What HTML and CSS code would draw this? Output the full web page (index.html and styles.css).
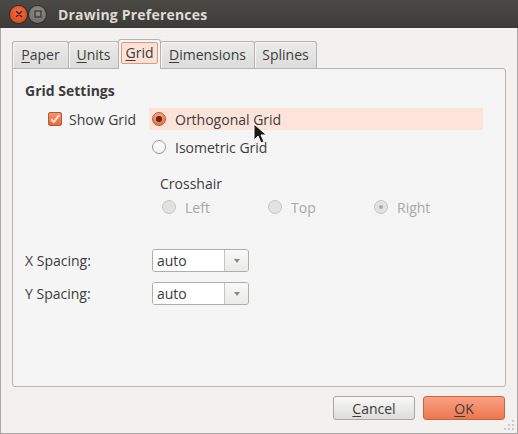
FILE: index.html
```html
<!DOCTYPE html>
<html>
<head>
<meta charset="utf-8">
<link rel="stylesheet" href="styles.css">
</head>
<body>
<div class="window">
  <div class="titlebar">
    <div class="wbtn close"><svg width="16" height="16" viewBox="0 0 16 16"><path d="M5.5 5.5l5 5M10.5 5.5l-5 5" stroke="#3a1a10" stroke-width="1.4" stroke-linecap="round"/></svg></div>
    <div class="wbtn mini"><svg width="16" height="16" viewBox="0 0 16 16"><rect x="5" y="5" width="6" height="6" fill="none" stroke="#3a3935" stroke-width="1.3"/></svg></div>
    <div class="title">Drawing Preferences</div>
  </div>
  <div class="body">
    <div class="notebook">
      <div class="tabs">
        <div class="tab w-paper"><span><u>P</u>aper</span></div>
        <div class="tab w-units"><span><u>U</u>nits</span></div>
        <div class="tab active"><span class="focus"><u>G</u>rid</span></div>
        <div class="tab w-dim"><span><u>D</u>imensions</span></div>
        <div class="tab w-spl"><span>Splines</span></div>
      </div>
      <div class="panel">
        <div class="heading">Grid Settings</div>
        <div class="gridrow">
          <div class="check-item">
            <span class="checkbox"><svg width="12" height="12" viewBox="0 0 12 12"><path d="M2.2 6.2l2.6 2.8L10.2 2" fill="none" stroke="#fde9e0" stroke-width="2"/></svg></span>
            <span>Show Grid</span>
          </div>
          <div class="radios">
            <div class="radio-row hover"><span class="radio on"></span><span>Orthogonal Grid</span></div>
            <div class="radio-row"><span class="radio"></span><span>Isometric Grid</span></div>
          </div>
        </div>
        <div class="crosshair">
          <div class="cross-label">Crosshair</div>
          <div class="cross-opts">
            <div class="radio-row dis"><span class="radio"></span><span>Left</span></div>
            <div class="radio-row dis"><span class="radio"></span><span>Top</span></div>
            <div class="radio-row dis"><span class="radio sel"></span><span>Right</span></div>
          </div>
        </div>
        <div class="spacing">
          <div class="sp-row"><span class="sp-label">X Spacing:</span>
            <div class="combo"><span class="combo-text">auto</span><span class="combo-btn"><span class="arrow"></span></span></div>
          </div>
          <div class="sp-row"><span class="sp-label">Y Spacing:</span>
            <div class="combo"><span class="combo-text">auto</span><span class="combo-btn"><span class="arrow"></span></span></div>
          </div>
        </div>
      </div>
    </div>
    <div class="buttons">
      <div class="btn"><u>C</u>ancel</div>
      <div class="btn ok"><u>O</u>K</div>
    </div>
    <div class="grip">
      <svg width="12" height="12" viewBox="0 0 12 12" fill="#c9c8c5">
        <rect x="9" y="1" width="2" height="2"/>
        <rect x="5" y="5" width="2" height="2"/><rect x="9" y="5" width="2" height="2"/>
        <rect x="1" y="9" width="2" height="2"/><rect x="5" y="9" width="2" height="2"/><rect x="9" y="9" width="2" height="2"/>
      </svg>
    </div>
  </div>
  <svg class="cursor" width="14" height="22" viewBox="0 0 14 22">
    <path d="M1 1v16l4-4 3 7 3-1.3-3-6.7h5.5z" fill="#1a1a1a" stroke="#fff" stroke-width="1"/>
  </svg>
</div>
</body>
</html>
```

FILE: styles.css
```css
* { box-sizing: border-box; }
html, body { margin: 0; padding: 0; }
body {
  width: 518px; height: 434px; overflow: hidden;
  font-family: "Open Sans", "DejaVu Sans", sans-serif;
  font-size: 14px; color: #3c3c3c;
}
u { text-decoration: underline; text-underline-offset: 2px; }
.window {
  position: relative;
  width: 518px; height: 434px;
  background: #f2f1f0;
  border-left: 1px solid #a8a7a3;
  border-right: 1px solid #a8a7a3;
  border-bottom: 1px solid #a8a7a3;
  display: flex; flex-direction: column;
}
.titlebar {
  height: 28px; flex: none;
  background: linear-gradient(#4b4a46, #3c3b37);
  display: flex; align-items: center;
  padding-left: 10px;
  margin: 0 -1px;
}
.wbtn {
  width: 17px; height: 17px; border-radius: 50%;
  display: flex; align-items: center; justify-content: center;
  margin-right: 2px;
}
.wbtn svg { display: block; }
.close { background: radial-gradient(circle at 50% 35%, #f26d3f, #d64315); box-shadow: 0 0 0 1px #2e2d2a; }
.mini { background: radial-gradient(circle at 50% 35%, #8e8c86, #6a6863); box-shadow: 0 0 0 1px #2e2d2a; }
.title {
  margin-left: 10px;
  font-weight: bold; font-size: 14px; color: #dfdbd2;
  font-family: "Open Sans", "DejaVu Sans", sans-serif;
  letter-spacing: 0.2px;
}
.body {
  flex: 1; position: relative;
  padding: 11px 11px 0 11px;
  display: flex; flex-direction: column;
}
.notebook { display: flex; flex-direction: column; }
.tabs { display: flex; align-items: flex-end; height: 29px; position: relative; z-index: 1; }
.tab {
  height: 27px;
  padding: 0 0 1px;
  display: flex; align-items: center; justify-content: center;
  background: linear-gradient(#ebebea, #dcdcdb);
  border: 1px solid #b5b4b1;
  border-bottom: none;
  border-radius: 3px 3px 0 0;
  margin-right: -1px;
  box-shadow: inset 1px 1px 0 #f7f7f6;
}
.w-paper { width: 57px; }
.w-units { width: 51px; }
.w-dim { width: 95px; }
.w-spl { width: 63px; }
.tab.active {
  width: 43px;
  height: 30px;
  background: #f5f5f5;
  box-shadow: none;
  padding: 0 0 3px;
  margin-bottom: -1px;
}
.focus {
  border: 1px solid #f0936f;
  border-radius: 2px;
  background: #fbe2d8;
  padding: 0 3px 1px;
}
.panel {
  width: 494px; height: 319px;
  background: #f5f5f5;
  border: 1px solid #b5b4b1;
  border-radius: 0 3px 3px 3px;
  padding: 13px 12px 0 12px;
}
.heading { font-weight: bold; height: 18px; line-height: 18px; }
.gridrow { display: flex; margin-top: 8px; }
.check-item {
  display: flex; align-items: center; gap: 7px;
  margin-left: 23px; width: 101px; height: 22px;
}
.checkbox {
  width: 14px; height: 14px; border-radius: 2px;
  border: 1px solid #c0552b;
  background: linear-gradient(#f6946f, #e76a3b);
  display: flex; align-items: center; justify-content: center;
  flex: none;
}
.checkbox svg { display: block; }
.radios { display: flex; flex-direction: column; gap: 6px; }
.radio-row { display: flex; align-items: center; gap: 9px; height: 22px; padding-left: 3px; white-space: nowrap; }
.radio-row.hover { background: #fde4da; width: 334px; }
.radio {
  width: 14px; height: 14px; border-radius: 50%;
  border: 1px solid #9a9997;
  background: linear-gradient(#ffffff, #efefee);
  flex: none; position: relative;
}
.radio.on {
  border-color: #c0552b;
  background: linear-gradient(#f8a284, #eb7147);
}
.radio.on::after {
  content: ""; position: absolute; left: 3px; top: 3px;
  width: 6px; height: 6px; border-radius: 50%; background: #5a2a18;
}
.crosshair { margin-left: 135px; margin-top: 16px; }
.cross-label { height: 20px; line-height: 20px; }
.cross-opts { display: grid; grid-template-columns: 106px 106px 106px; margin-top: 2px; margin-left: -1px; }
.radio-row.dis { color: #a9a8a5; }
.radio-row.dis .radio { border-color: #c6c5c2; background: #e3e2e0; }
.radio.sel::after {
  content: ""; position: absolute; left: 4px; top: 4px;
  width: 4px; height: 4px; border-radius: 50%; background: #a9a8a5;
}
.spacing { margin-top: 31px; display: flex; flex-direction: column; gap: 10px; }
.sp-row { display: flex; align-items: center; height: 23px; }
.sp-label { width: 127px; }
.combo {
  width: 97px; height: 23px;
  border: 1px solid #afaeab; border-radius: 3px;
  display: flex; overflow: hidden;
}
.combo-text { flex: 1; background: #fff; padding-left: 4px; line-height: 21px; }
.combo-btn {
  width: 24px; border-left: 1px solid #c6c5c2;
  background: linear-gradient(#f8f8f8, #ebebea);
  display: flex; align-items: center; justify-content: center;
}
.arrow {
  width: 0; height: 0;
  border-left: 3.5px solid transparent; border-right: 3.5px solid transparent;
  border-top: 4px solid #8a8986; margin-top: 1px;
}
.buttons { display: flex; justify-content: flex-end; gap: 8px; margin-top: 9px; padding-right: 1px; }
.btn {
  width: 82px; height: 24px; border-radius: 3px;
  border: 1px solid #a9a8a5;
  background: linear-gradient(#f9f9f8, #dcdcdb);
  display: flex; align-items: center; justify-content: center;
}
.btn.ok {
  border-color: #c4673f;
  background: linear-gradient(#f9a182, #ec774f);
}
.grip { position: absolute; right: 2px; bottom: 2px; }
.grip svg { display: block; }
.cursor { position: absolute; left: 252px; top: 123px; }
```
